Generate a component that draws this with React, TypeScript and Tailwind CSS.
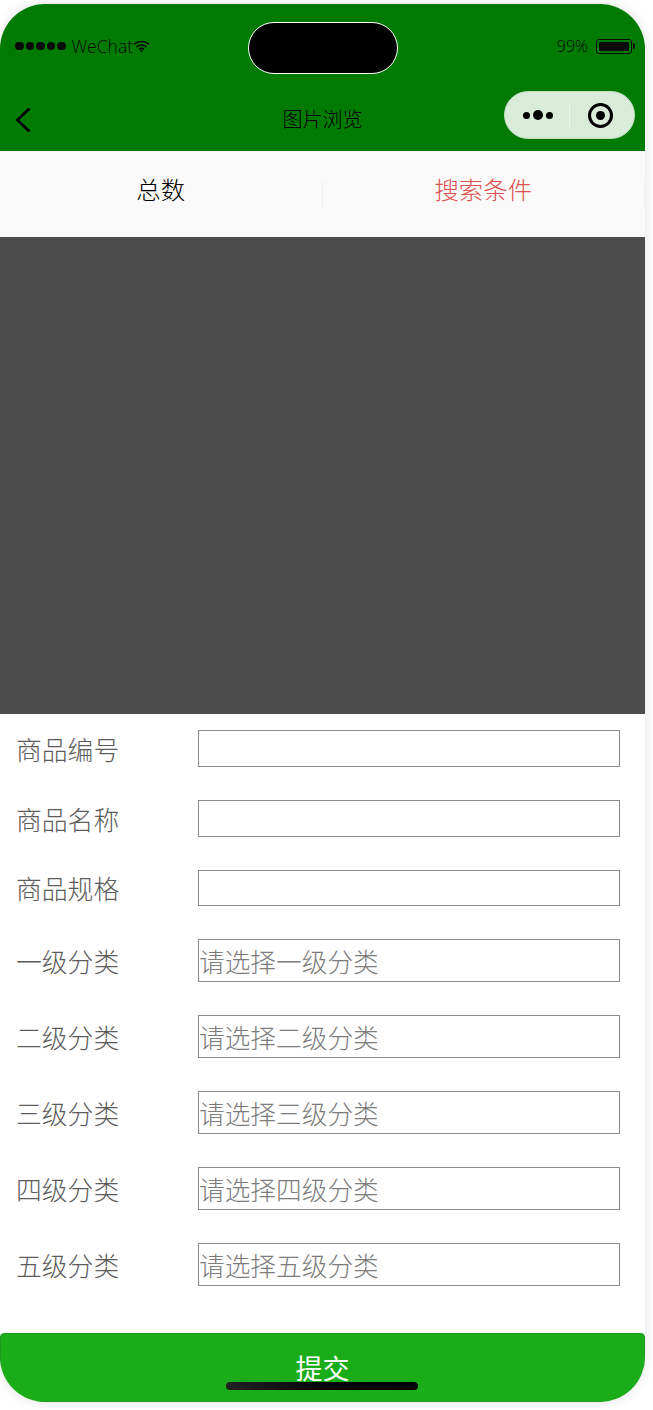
import React from 'react';

const cjk = 'font-["Noto_Sans_CJK_SC","Noto_Sans",sans-serif]';

const TextRow = ({ label, className }: { label: string; className: string }) => (
  <div className={`flex items-center pl-4 pr-[25px] ${className}`}>
    <span className="w-[182px] shrink-0 text-[25.8px] leading-none font-light text-[#5c5c5c]">{label}</span>
    <div className="h-full flex-1 border border-[#8a8a8a]" />
  </div>
);

const SelectRow = ({ label, hint }: { label: string; hint: string }) => (
  <div className="flex h-[43px] items-center pl-4 pr-[25px]">
    <span className="w-[182px] shrink-0 text-[25.8px] leading-none font-light text-[#5c5c5c]">{label}</span>
    <div className="flex h-full flex-1 items-center border border-[#8a8a8a] text-[25.7px] leading-none font-light text-[#7c7c7c]">
      {hint}
    </div>
  </div>
);

const Wifi = () => (
  <svg width="17" height="13" viewBox="0 0 17 13" fill="none" stroke="#0a0a0a" strokeWidth="1.7">
    <path d="M1 4.2C5.2 .6 11.8 .6 16 4.2" />
    <path d="M3.5 6.8C6.2 4.6 10.8 4.6 13.5 6.8" />
    <path d="M6 9.2C7.4 8.2 9.6 8.2 11 9.2" />
    <path d="M8.5 12.6 6.8 10.6C7.8 10 9.2 10 10.2 10.6Z" fill="#0a0a0a" stroke="none" />
  </svg>
);

const StatusBar = () => (
  <div className="flex h-[80px] items-start justify-between pl-[15px] pr-[10px] pt-[33px] text-[#0a0a0a]">
    <div className="flex items-center">
      <div className="flex gap-[2px]">
        {[0, 1, 2, 3, 4].map((i) => (
          <span key={i} className="h-[8.5px] w-[8.5px] rounded-full bg-[#0a0a0a]" />
        ))}
      </div>
      <span className="ml-[6px] font-['Open_Sans'] text-[17.5px] leading-[18px] font-light">WeChat</span>
      <Wifi />
    </div>
    <div className="flex items-center">
      <span className="font-['Open_Sans'] text-[16px] leading-[18px] font-light">99%</span>
      <div className="ml-[8px] flex h-[15px] w-[36px] items-center rounded-[3px] border border-[#0a0a0a] p-[2px]">
        <div className="h-full w-full rounded-[1px] bg-[#0a0a0a]" />
      </div>
      <div className="ml-[1px] h-[6px] w-[2px] rounded-r-sm bg-[#0a0a0a]" />
    </div>
  </div>
);

const NavBar = () => (
  <div className="relative flex h-[67px] items-start justify-between pl-[15px] pr-[10px]">
    <svg className="mt-[23px]" width="16" height="26" viewBox="0 0 16 26" fill="none" stroke="#000" strokeWidth="2.8">
      <path d="M14.5 1.5 2.5 13l12 11.5" />
    </svg>
    <span className="absolute top-[22px] left-0 w-full text-center text-[20px] leading-[26px] font-light text-black">图片浏览</span>
    <div className="relative mt-[7px] flex h-[48px] w-[131px] items-center rounded-full border border-[#c4dcc4] bg-[#d8ecd8]">
      <div className="flex w-[64px] items-center justify-center gap-[3px] pl-[1px]">
        <span className="h-[7px] w-[7px] rounded-full bg-black" />
        <span className="h-[10px] w-[10px] rounded-full bg-black" />
        <span className="h-[7px] w-[7px] rounded-full bg-black" />
      </div>
      <div className="h-[26px] w-px bg-[#e8f4e8]" />
      <div className="flex flex-1 items-center justify-center pr-[3px]">
        <div className="flex h-[25px] w-[25px] items-center justify-center rounded-full border-[3px] border-black">
          <span className="h-[9px] w-[9px] rounded-full bg-black" />
        </div>
      </div>
    </div>
  </div>
);

const Tabs = () => (
  <div className="flex h-[86px] items-center bg-[#f9f9f9] text-[24.4px] leading-none font-light">
    <div className="flex h-[26px] flex-1 items-center justify-center border-r border-[#eeeeee] pb-[10px] text-black">总数</div>
    <div className="flex h-[26px] flex-1 items-center justify-center border-r border-[#f2f2f2] pb-[10px] text-[#dd4f4f]">搜索条件</div>
  </div>
);

export default function App() {
  return (
    <div className={`h-[1410px] w-[653px] overflow-hidden bg-white pt-1 ${cjk}`}>
      <div className="relative flex h-[1398px] w-[645px] flex-col overflow-hidden rounded-[45px] bg-white shadow-[0_0_12px_rgba(0,0,0,0.12)]">
        <div className="bg-[#007a00]">
          <StatusBar />
          <NavBar />
        </div>
        <Tabs />
        <div className="h-[477px] bg-[#4c4c4c]" />
        <div className="flex flex-col pt-4">
          <TextRow label="商品编号" className="h-[37px]" />
          <TextRow label="商品名称" className="mt-[33px] h-[37px]" />
          <TextRow label="商品规格" className="mt-[33px] h-[36px]" />
          <div className="mt-[33px] flex flex-col gap-[33px]">
            <SelectRow label="一级分类" hint="请选择一级分类" />
            <SelectRow label="二级分类" hint="请选择二级分类" />
            <SelectRow label="三级分类" hint="请选择三级分类" />
            <SelectRow label="四级分类" hint="请选择四级分类" />
            <SelectRow label="五级分类" hint="请选择五级分类" />
          </div>
        </div>
        <button className="mt-auto flex h-[69px] w-full justify-center rounded-t-[4px] border border-[#1a9a1a] bg-[#1aad19] pt-[16px] text-[27px] leading-[36px] text-white">
          提交
        </button>
        {/* dynamic island and home bar sit over the page */}
        <div className="absolute top-[18px] left-[248px] h-[52px] w-[150px] rounded-full border border-white bg-black" />
        <div className="absolute bottom-[12px] left-[226px] h-[8px] w-[192px] rounded-full bg-gradient-to-r from-[#222222] to-black" />
      </div>
    </div>
  );
}
